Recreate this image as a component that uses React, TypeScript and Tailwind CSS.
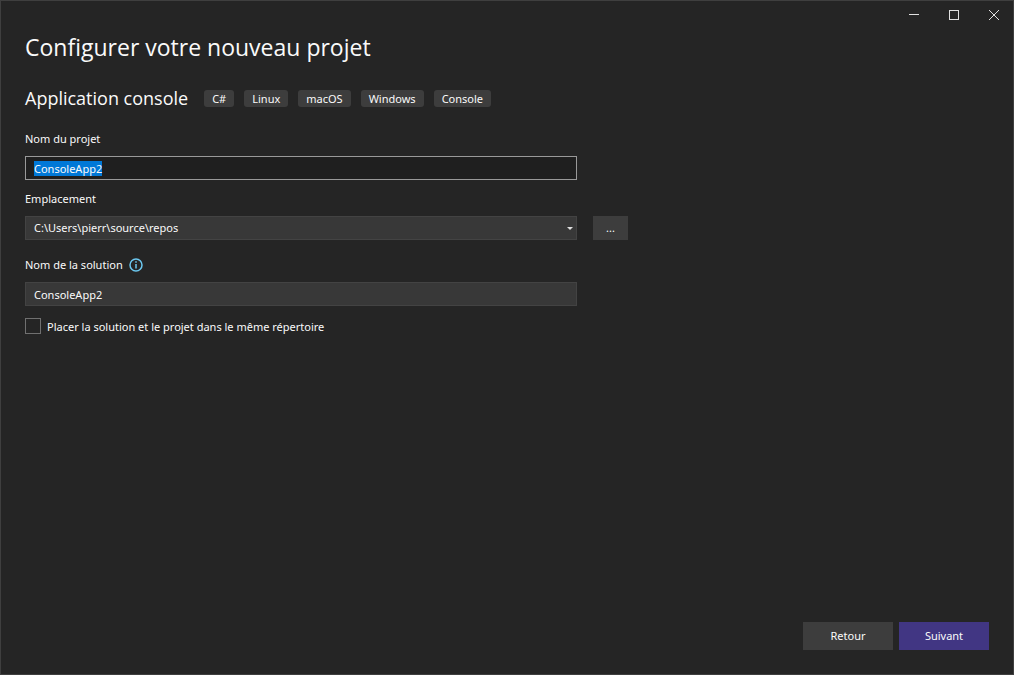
import { useEffect, useRef, useState } from "react";

const tags = ["C#", "Linux", "macOS", "Windows", "Console"];

function WindowControls() {
  const button = "flex h-[30px] w-10 items-center justify-center text-[#e0e0e0]";
  return (
    <header className="flex justify-end">
      <button type="button" aria-label="Réduire" className={button}>
        <svg width="10" height="10" viewBox="0 0 10 10" fill="currentColor" shapeRendering="crispEdges">
          <path d="M0 4h10v1H0z" />
        </svg>
      </button>
      <button type="button" aria-label="Agrandir" className={button}>
        <svg width="10" height="10" viewBox="0 0 10 10" fill="none" stroke="currentColor" shapeRendering="crispEdges">
          <path d="M.5.5h9v9h-9z" />
        </svg>
      </button>
      <button type="button" aria-label="Fermer" className={button}>
        <svg width="10" height="10" viewBox="0 0 10 10" fill="none" stroke="currentColor">
          <path d="M0 0l10 10M10 0L0 10" />
        </svg>
      </button>
    </header>
  );
}

export default function App() {
  const nameRef = useRef<HTMLInputElement>(null);
  const [name, setName] = useState("ConsoleApp2");
  const [solution, setSolution] = useState("ConsoleApp2");

  useEffect(() => {
    nameRef.current?.focus();
    nameRef.current?.select();
  }, []);

  return (
    <div className="flex min-h-screen flex-col bg-[#252525] font-['Noto_Sans','Open_Sans',sans-serif] text-[11px] text-[#fafafa] shadow-[inset_0_0_0_1px_#3f3f3f]">
      <WindowControls />
      <main className="flex-1 px-[25px]">
        <h1 className="font-['Open_Sans','Noto_Sans',sans-serif] text-[23px] leading-[34px]">
          Configurer votre nouveau projet
        </h1>
        <div className="mt-[22px] flex items-center gap-4">
          <h2 className="font-['Open_Sans','Noto_Sans',sans-serif] text-lg leading-6">Application console</h2>
          <ul className="flex gap-[10px] leading-[17px]">
            {tags.map((tag) => (
              <li key={tag} className="rounded-[3px] bg-[#3d3d3d] px-2">
                {tag}
              </li>
            ))}
          </ul>
        </div>

        <form id="project" className="mt-5 flex flex-col" onSubmit={(e) => e.preventDefault()}>
          <label htmlFor="name" className="self-start leading-[18px]">Nom du projet</label>
          <input
            id="name"
            ref={nameRef}
            value={name}
            onChange={(e) => setName(e.target.value)}
            className="mt-2 h-6 w-full max-w-[552px] border border-[#999999] bg-[#1f1f1f] px-2 leading-4 outline-none selection:bg-[#0078d7] selection:text-[#fafafa]"
          />

          <label htmlFor="location" className="mt-[10px] self-start leading-[18px]">Emplacement</label>
          <div className="mt-2 flex gap-4">
            <div className="relative w-full max-w-[552px]">
              <select
                id="location"
                className="h-6 w-full appearance-none border border-[#434343] bg-[#383838] pr-6 pl-2 leading-4"
              >
                <option>C:\Users\pierr\source\repos</option>
              </select>
              <svg
                className="pointer-events-none absolute top-[11px] right-1"
                width="6"
                height="3"
                viewBox="0 0 6 3"
                fill="#e0e0e0"
              >
                <path d="M0 0h6L3 3z" />
              </svg>
            </div>
            <button type="button" aria-label="Parcourir" className="h-6 w-[35px] shrink-0 bg-[#3d3d3d] leading-4">
              ...
            </button>
          </div>

          <div className="mt-4 flex items-center gap-[6px]">
            <label htmlFor="solution" className="leading-[18px]">Nom de la solution</label>
            <svg width="14" height="14" viewBox="0 0 14 14" fill="none" aria-hidden="true">
              <circle cx="7" cy="7" r="6" stroke="#6cc8f0" strokeWidth="1.5" />
              <path d="M7 3.2v1.6M7 6v4.6" stroke="#6cc8f0" strokeWidth="1.5" />
            </svg>
          </div>
          <input
            id="solution"
            value={solution}
            onChange={(e) => setSolution(e.target.value)}
            className="mt-2 h-6 w-full max-w-[552px] border border-[#434343] bg-[#383838] px-2 leading-4 outline-none"
          />

          <div className="mt-3 flex items-start gap-[6px]">
            <input
              id="same-folder"
              type="checkbox"
              className="size-4 shrink-0 appearance-none border border-[#707070] bg-[#252525] checked:bg-[#413683]"
            />
            <label htmlFor="same-folder" className="leading-[18px]">
              Placer la solution et le projet dans le même répertoire
            </label>
          </div>
        </form>
      </main>
      <footer className="flex justify-end gap-[6px] p-[25px]">
        <button type="button" className="h-7 w-[90px] bg-[#3d3d3d] leading-4">Retour</button>
        <button type="submit" form="project" className="h-7 w-[90px] bg-[#413683] leading-4">Suivant</button>
      </footer>
    </div>
  );
}
